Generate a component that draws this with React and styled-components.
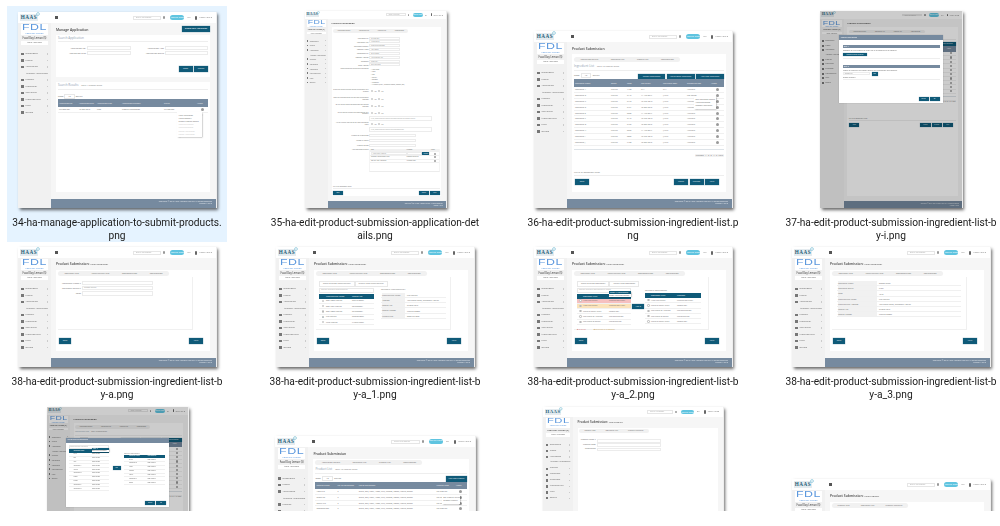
import React from 'react';
import styled, { createGlobalStyle } from 'styled-components';

const GlobalStyle = createGlobalStyle`
  html, body {
    margin: 0;
    background: #fff;
    font-family: 'Open Sans', 'Liberation Sans', sans-serif;
  }
  * {
    box-sizing: border-box;
  }
`;

const Viewport = styled.div`
  height: 511px;
  overflow: hidden;
  padding: 6px 0 0 7px;
`;

const Grid = styled.div`
  display: grid;
  grid-template-columns: repeat(4, 220px);
  column-gap: 38px;
  align-items: start;
`;

const Tile = styled.div`
  display: flex;
  flex-direction: column;
  align-items: center;
  padding-top: 5px;
  background: ${(p) => (p.$selected ? '#e5f3ff' : 'transparent')};
`;

const Slot = styled.div`
  height: ${(p) => p.$h}px;
  display: flex;
  align-items: flex-end;
`;

const Label = styled.div`
  margin-top: 8px;
  font-family: Roboto, 'Open Sans', sans-serif;
  font-size: 10.2px;
  line-height: 13px;
  color: #1a1a1a;
  text-align: center;
  white-space: nowrap;
  filter: blur(0.25px);
  span {
    display: block;
  }
`;

const Shell = styled.div`
  position: relative;
  width: ${(p) => p.$w}px;
  height: ${(p) => p.$h}px;
  background: #fff;
  box-shadow: 1px 0 0 #eee, 2px 2px 3px rgba(0, 0, 0, 0.6);
  filter: blur(0.5px);
`;

const Page = styled.div`
  position: relative;
  zoom: ${(p) => p.$scale};
  width: ${(p) => p.$w / p.$scale}px;
  height: ${(p) => p.$h / p.$scale}px;
  display: flex;
  flex-direction: column;
  overflow: hidden;
  font-family: 'Open Sans', sans-serif;
  font-size: 2.4px;
  line-height: 3px;
  color: #666;
`;

const TopBar = styled.div`
  flex: none;
  height: 11px;
  display: flex;
  align-items: center;
  padding: 0 4px 0 2px;
`;

const Logo = styled.div`
  position: relative;
  width: 18px;
  height: 7px;
  background: #e4ebef;
  font-family: 'Liberation Serif', serif;
  font-weight: 700;
  font-size: 5.2px;
  line-height: 7px;
  letter-spacing: 0.5px;
  text-align: center;
  color: #1d5f78;
  svg {
    position: absolute;
    right: -2px;
    top: -2px;
  }
`;

const Burger = styled.div`
  width: 3px;
  height: 3px;
  margin-left: 17px;
  background: repeating-linear-gradient(#555 0, #555 0.6px, #fff 0.6px, #fff 1.2px);
`;

const SearchBox = styled.div`
  margin-left: auto;
  width: 28px;
  height: 4px;
  border: 0.3px solid #e6e6e6;
  padding-left: 2px;
  font-size: 2.1px;
  line-height: 2.4px;
  color: #aaa;
`;

const Mag = styled.div`
  width: 2.4px;
  height: 2.4px;
  margin: 0 5px 0 2px;
  border-radius: 50%;
  background: #999;
`;

const Pill = styled.div`
  width: 14px;
  height: 4.5px;
  border-radius: 3px;
  background: #5fc4e0;
  color: #fff;
  font-size: 1.7px;
  line-height: 4.5px;
  text-align: center;
  white-space: nowrap;
`;

const TopText = styled.div`
  margin-left: ${(p) => p.$gap || 3}px;
  font-size: 2.2px;
  color: #777;
  white-space: nowrap;
`;

const UserIcon = styled.div`
  width: 2px;
  height: 4px;
  margin-left: 5px;
  border-radius: 1px;
  background: #666;
`;

const Body = styled.div`
  flex: 1;
  min-height: 0;
  display: flex;
`;

const Sidebar = styled.div`
  flex: none;
  width: 33px;
  padding: 1px 3px 0;
  background: #f1f1f1;
`;

const Brand = styled.div`
  height: 11px;
  background: #fff;
  text-align: center;
  color: #5a97dd;
  strong {
    display: block;
    font-family: 'Liberation Sans', sans-serif;
    font-weight: 400;
    font-size: 8.5px;
    line-height: 7.5px;
    letter-spacing: 0.4px;
    transform: scaleX(1.45);
  }
  span {
    display: block;
    font-size: 2.3px;
    line-height: 3px;
  }
`;

const CompanyName = styled.div`
  margin-top: 2px;
  font-size: 2.5px;
  line-height: 3px;
  font-weight: 600;
  color: #555;
  text-align: center;
  white-space: nowrap;
`;

const RoleTag = styled.div`
  margin: 1px 0 6.2px;
  background: #fff;
  font-size: 2.2px;
  line-height: 3.5px;
  text-align: center;
`;

const MenuRow = styled.div`
  height: 6.5px;
  display: flex;
  align-items: center;
  padding-left: ${(p) => (p.$sub ? 5 : 0)}px;
  white-space: nowrap;
  i {
    width: 2.5px;
    height: 2.5px;
    margin-right: 2px;
    background: #777;
  }
  b {
    margin-left: auto;
    width: 1.5px;
    height: 1.5px;
    background: #ccc;
  }
`;

const MainCol = styled.div`
  flex: 1;
  min-width: 0;
  display: flex;
  flex-direction: column;
`;

const Main = styled.div`
  flex: 1;
  min-height: 0;
  display: flex;
  flex-direction: column;
  padding: 0 6px 7px 5px;
  background: #f6f6f6;
`;

const TitleRow = styled.div`
  flex: none;
  height: 12px;
  display: flex;
  align-items: center;
  justify-content: space-between;
  font-size: 3.4px;
  font-weight: 600;
  color: #444;
  small {
    font-size: 2.5px;
    font-weight: 400;
  }
`;

const Card = styled.div`
  position: relative;
  flex: ${(p) => (p.$h ? 'none' : 1)};
  height: ${(p) => (p.$h ? `${p.$h}px` : 'auto')};
  min-height: 0;
  display: flex;
  flex-direction: column;
  margin-bottom: ${(p) => p.$mb || 0}px;
  padding: 1px 2px 2px;
  background: #fff;
  overflow: hidden;
`;

const Footer = styled.div`
  flex: none;
  height: 9.5px;
  padding: 2.5px 4px 0 0;
  background: #768a9f;
  color: #e4e9ee;
  font-size: 1.9px;
  line-height: 2.4px;
  text-align: right;
`;

const Btn = styled.div`
  flex: none;
  width: ${(p) => p.$w || 14}px;
  height: 5.5px;
  margin-top: ${(p) => p.$mt || 0}px;
  background: #0f5a78;
  box-shadow: 0 0 0.5px 0.3px #9fb8c6;
  color: #e8f0f4;
  font-size: 2px;
  line-height: 5.5px;
  text-align: center;
  white-space: nowrap;
`;

const BtnRow = styled.div`
  flex: none;
  display: flex;
  justify-content: ${(p) => p.$justify || 'flex-end'};
  align-items: center;
  gap: ${(p) => p.$gap ?? 1.5}px;
  margin-top: ${(p) => p.$mt ?? 'auto'};
`;

const NavRow = styled.div`
  flex: none;
  display: flex;
  justify-content: space-between;
  align-items: center;
  margin-top: ${(p) => (p.$mt ? `${p.$mt}px` : 'auto')};
  margin-bottom: 5px;
  padding: 0 5px 0 1px;
`;

const TabBar = styled.div`
  flex: none;
  align-self: flex-start;
  display: flex;
  justify-content: space-around;
  width: ${(p) => p.$w || 111}px;
  height: 5px;
  margin-top: ${(p) => p.$mt || 0}px;
  border-radius: 3px;
  background: #f1f1f1;
  font-size: 2.1px;
  line-height: 5px;
  white-space: nowrap;
`;

const Heading = styled.div`
  flex: none;
  margin-top: ${(p) => p.$mt || 0}px;
  padding-bottom: 1px;
  border-bottom: 0.4px solid #eee;
  font-size: 3px;
  line-height: 4px;
  color: #8ea0b0;
  small {
    margin-left: 3px;
    font-size: 2.1px;
    color: #777;
  }
`;

const SectionBox = styled.div`
  position: relative;
  flex: 1;
  min-height: 0;
  margin: 1px 15px 0 0;
  padding: 4px 3px;
  border-bottom: 0.4px solid #f0f0f0;
  border-right: 0.4px solid #f0f0f0;
`;

const FieldGrid = styled.div`
  display: grid;
  grid-template-columns: ${(p) => p.$cols};
  row-gap: ${(p) => p.$gap || 1.2}px;
  column-gap: 1px;
  align-items: center;
  margin-top: ${(p) => p.$mt || 0}px;
`;

const FieldLabel = styled.div`
  text-align: right;
  font-size: 2.2px;
  white-space: nowrap;
`;

const Input = styled.div`
  width: ${(p) => (p.$w ? `${p.$w}px` : 'auto')};
  height: 4.2px;
  border: 0.3px solid #ececec;
  padding-left: 1px;
  font-size: 2.1px;
  line-height: 2.6px;
  color: #888;
  white-space: nowrap;
  overflow: hidden;
`;

const Row = styled.div`
  flex: none;
  display: grid;
  grid-template-columns: ${(p) => p.$cols};
  align-items: center;
  height: ${(p) => p.$h}px;
  padding: 0 1px;
  background: ${(p) => p.$bg || 'transparent'};
  color: ${(p) => p.$color || '#666'};
  border-bottom: ${(p) => (p.$plain ? 'none' : '0.3px solid #f0f0f0')};
  font-size: 1.95px;
  white-space: nowrap;
  overflow: hidden;
`;

const KeyCell = styled.span`
  background: #f1f1f1;
  line-height: 5.3px;
`;

const ValueCell = styled.span`
  padding-left: 2px;
`;

const ActionDot = styled.div`
  justify-self: center;
  width: 3px;
  height: 3px;
  border-radius: 50%;
  background: #9a9a9a;
`;

const Radio = styled.div`
  justify-self: center;
  width: 2.4px;
  height: 2.4px;
  border: 0.3px solid #bbb;
  border-radius: 50%;
  background: ${(p) => (p.$on ? '#0f5a78' : '#fff')};
`;

const Popup = styled.div`
  position: absolute;
  left: ${(p) => p.$x}px;
  top: ${(p) => p.$y}px;
  width: ${(p) => p.$w}px;
  padding: 1.5px;
  background: #fff;
  box-shadow: 0.5px 0.5px 1.5px rgba(0, 0, 0, 0.5);
  font-size: 1.9px;
  line-height: 3.2px;
  white-space: nowrap;
`;

const MutedLine = styled.div`
  color: #c8c8c8;
`;

const Overlay = styled.div`
  position: absolute;
  inset: 0;
  background: rgba(0, 0, 0, 0.2);
`;

const Modal = styled.div`
  position: absolute;
  left: ${(p) => p.$x}px;
  top: ${(p) => p.$y}px;
  width: ${(p) => p.$w}px;
  height: ${(p) => p.$h}px;
  display: flex;
  flex-direction: column;
  background: #fff;
  box-shadow: 0 0 1px rgba(0, 0, 0, 0.5);
`;

const ModalHead = styled.div`
  flex: none;
  height: 7px;
  padding-left: 2px;
  background: #768a9f;
  color: #fff;
  font-size: 2.6px;
  line-height: 7px;
`;

const ModalBody = styled.div`
  flex: 1;
  min-height: 0;
  display: flex;
  flex-direction: column;
  padding: ${(p) => p.$pad || '6px 5px 4px'};
`;

const StepHead = styled.div`
  margin-bottom: 1px;
  padding-left: 1px;
  background: #768a9f;
  color: #fff;
  font-size: 2.4px;
  line-height: 5px;
`;

const StepBox = styled.div`
  height: ${(p) => p.$h}px;
  margin-bottom: 8px;
  border-bottom: 0.3px solid #eee;
  font-size: 2.1px;
`;

const Split = styled.div`
  display: flex;
  gap: ${(p) => p.$gap || 4}px;
  align-items: ${(p) => p.$align || 'flex-start'};
  margin-top: ${(p) => p.$mt || 0}px;
`;

const ListCol = styled.div`
  position: relative;
  flex: none;
  width: ${(p) => p.$w}px;
  min-height: ${(p) => p.$minH || 0}px;
  margin-left: ${(p) => p.$ml || 0}px;
`;

const DocTable = styled(ListCol)`
  border-bottom: 0.3px solid #ececec;
  border-left: 0.3px solid #f4f4f4;
  border-right: 0.3px solid #f4f4f4;
`;

const SmallTitle = styled.div`
  margin-bottom: 1px;
  font-size: 2.3px;
  line-height: 3.5px;
  color: #777;
`;

const SearchField = styled.div`
  height: 4.5px;
  margin-bottom: 1px;
  border: 0.3px solid #e8e8e8;
  padding-left: 1px;
  font-size: 1.9px;
  line-height: 2.5px;
  color: #aaa;
  white-space: nowrap;
  overflow: hidden;
`;

const Outline = styled.div`
  flex: none;
  padding: 0 3px;
  border: 0.3px solid #e8e8e8;
  font-size: 2.1px;
  line-height: 3.5px;
  white-space: nowrap;
`;

const DarkMenu = styled(Popup)`
  padding: 0;
  line-height: 3px;
  div:first-child {
    background: #0f5a78;
    color: #fff;
    padding-left: 1px;
  }
`;

const Legend = styled.div`
  display: flex;
  gap: 8px;
  margin-top: 3px;
  font-size: 2px;
  span:first-child {
    color: #d87a7a;
  }
  span:last-child {
    color: #caa35a;
  }
`;

const Note = styled.div`
  flex: none;
  margin-top: ${(p) => p.$mt || 'auto'};
  padding-bottom: 1px;
  border-bottom: 0.4px solid #eee;
  font-size: 2.1px;
`;

const Pager = styled.div`
  flex: none;
  align-self: flex-end;
  margin-top: 4px;
  padding: 0 1px;
  border-radius: 1px;
  background: #f1f1f1;
  font-size: 2px;
  line-height: 3px;
  word-spacing: 1px;
`;

const ScrollLine = styled.div`
  flex: none;
  height: 1px;
  margin-top: 3px;
  background: #dde3e8;
`;

const ShowRow = styled.div`
  flex: none;
  display: flex;
  align-items: center;
  justify-content: ${(p) => p.$justify || 'space-between'};
  margin-top: ${(p) => p.$mt || 2}px;
  height: ${(p) => p.$h || 6}px;
  font-size: 2.1px;
  b {
    font-weight: 400;
    margin: 0 1px;
    padding: 0 3px;
    border: 0.3px solid #e8e8e8;
  }
`;

const CheckList = styled.div`
  padding-left: 2px;
  font-size: 2.1px;
  line-height: 3.65px;
`;

const QuestionRow = styled.div`
  display: grid;
  grid-template-columns: 50px 1fr;
  column-gap: 1px;
  align-items: ${(p) => (p.$top ? 'start' : 'center')};
  margin-top: ${(p) => p.$mt || 4}px;
`;

const QuestionLabel = styled.div`
  font-size: 1.9px;
  line-height: 2.6px;
  text-align: right;
`;

const Choices = styled.div`
  display: flex;
  align-items: center;
  gap: 2px;
  padding-left: 2px;
  font-size: 2.1px;
`;

const TextBlock = styled.div`
  height: 7px;
  margin: 1px 0 0 51px;
  width: 88px;
  border: 0.3px solid #ececec;
  padding: 1px;
  font-size: 1.9px;
  color: #999;
  white-space: nowrap;
  overflow: hidden;
`;

const menuItems = [
  'Dashboard',
  'Profile',
  'Application',
  '*Manage Application',
  'Product',
  'Ingredient',
  'Certificate',
  'Manufacturer',
  'User',
  'Others',
];

const Frame = ({ w, h, scale = 1, children, over }) => (
  <Shell $w={w} $h={h}>
    <Page $w={w} $h={h} $scale={scale}>
      <TopBar>
        <Logo>
          HAAS
          <svg width="4" height="4" viewBox="0 0 4 4">
            <circle cx="2" cy="2" r="1.4" fill="#fff" stroke="#4aa7c4" strokeWidth="0.5" />
          </svg>
        </Logo>
        <Burger />
        <SearchBox>Enter Keywords</SearchBox>
        <Mag />
        <Pill>Food Day Lemon</Pill>
        <TopText>EN</TopText>
        <UserIcon />
        <TopText $gap={2}>Kevin Hays ▾</TopText>
      </TopBar>
      <Body>
        <Sidebar>
          <Brand>
            <strong>FDL</strong>
            <span>Food Day Lemon</span>
          </Brand>
          <CompanyName>Food Day Lemon (S)</CompanyName>
          <RoleTag>Main Applicant</RoleTag>
          {menuItems.map((item) =>
            item[0] === '*' ? (
              <MenuRow key={item} $sub>
                {item.slice(1)}
              </MenuRow>
            ) : (
              <MenuRow key={item}>
                <i />
                {item}
                <b />
              </MenuRow>
            )
          )}
        </Sidebar>
        <MainCol>
          <Main>{children}</Main>
          <Footer>
            Copyright © 2017 Halal Authority Pte Ltd. All Rights Reserved
            <br />
            Version 1.0.0.0
          </Footer>
        </MainCol>
      </Body>
      {over}
    </Page>
  </Shell>
);

const SubmitTitle = ({ sub }) => (
  <TitleRow>
    <span>
      Product Submission{sub ? ': ' : ''}
      {sub && <small>{sub}</small>}
    </span>
  </TitleRow>
);

const SubmissionTabs = ({ mt }) => (
  <TabBar $w={106} $mt={mt}>
    <span>Application Details</span>
    <span>Ingredient List</span>
    <span>Product List</span>
    <span>Confirmation</span>
  </TabBar>
);

const ManageApplication = () => {
  const cols = '20px 18px 25px 42px 33px 1fr';
  return (
    <>
      <TitleRow>
        <span>Manage Application</span>
        <Btn $w={28}>Create New Application</Btn>
      </TitleRow>
      <Card $h={42} $mb={5}>
        <Heading>Search Application</Heading>
        <FieldGrid $cols="28px 44px 32px 43px" $mt={4} $gap={1}>
          <FieldLabel>Application No.</FieldLabel>
          <Input />
          <FieldLabel>Application Year</FieldLabel>
          <Input />
          <FieldLabel>Application Type</FieldLabel>
          <Input />
          <FieldLabel>Application Status</FieldLabel>
          <Input />
        </FieldGrid>
        <BtnRow $mt="11px">
          <Btn>Reset</Btn>
          <Btn>Search</Btn>
        </BtnRow>
      </Card>
      <Card>
        <Heading>
          Search Results<small>Total 1 records found</small>
        </Heading>
        <ShowRow $mt={3} $h={6} $justify="flex-start">
          Show <b>10</b> Entries
        </ShowRow>
        <Row $cols={cols} $h={8} $bg="#768a9f" $color="#f2f4f6" $plain>
          <span>Application No.</span>
          <span>Application Date</span>
          <span>Application Type</span>
          <span>Application Category</span>
          <span>Status</span>
          <span>Action</span>
        </Row>
        <Row $cols={cols} $h={6}>
          <span>PR18001001</span>
          <span>12 Sep 2018</span>
          <span>New</span>
          <span>Product Submission</span>
          <span>In Progress</span>
          <ActionDot />
        </Row>
        <Popup $x={121} $y={30} $w={25}>
          <div>View Application</div>
          <div>View Summary</div>
          <div>Submit Product Details</div>
          <MutedLine>View Cert Details</MutedLine>
          <MutedLine>View Documents</MutedLine>
          <MutedLine>Renew Application</MutedLine>
          <MutedLine>Cancel Application</MutedLine>
        </Popup>
      </Card>
    </>
  );
};

const YesNo = ({ label, mt }) => (
  <QuestionRow $mt={mt}>
    <QuestionLabel>{label}</QuestionLabel>
    <Choices>
      <Radio /> Yes <Radio /> No
    </Choices>
  </QuestionRow>
);

const ApplicationDetails = () => {
  const fields = [
    ['Application No.', 'PR18001001'],
    ['Application Year', '12 Sep 2018'],
    ['Application Category', 'Product Submission'],
    ['Company Name', 'ABC Foods'],
    ['Registration No.', '2018100201'],
    ['Company Address', '123 Clementi Ave'],
    ['Telephone', '69001234'],
    ['Email Address', 'abc@abc.com'],
  ];
  return (
    <>
      <SubmitTitle />
      <Card>
        <SubmissionTabs mt={2} />
        <FieldGrid $cols="50px 43px" $mt={5} $gap={1.2}>
          {fields.map(([label, value]) => (
            <React.Fragment key={label}>
              <FieldLabel>{label}</FieldLabel>
              <Input>{value}</Input>
            </React.Fragment>
          ))}
        </FieldGrid>
        <QuestionRow $mt={2} $top>
          <QuestionLabel>Please indicate the types of halal certification</QuestionLabel>
          <CheckList>
            <div>○ Halal Logo</div>
            <div>○ Meat</div>
            <div>○ Fish</div>
            <div>○ Poultry</div>
            <div>○ Seafood</div>
            <div>○ Vegetable</div>
            <div>○ All others (Dairy, Vegetable Based, Dessert, Etc)</div>
          </CheckList>
        </QuestionRow>
        <YesNo mt={5} label="Is there any animal or animal derived ingredients in your product?" />
        <YesNo mt={5.3} label="Does your premises handle any non-halal ingredients or products?" />
        <YesNo mt={5.3} label="Do you use any shared equipment with non-certified products?" />
        <YesNo mt={5} label="Do you have an external halal consultant for your company?" />
        <TextBlock>If yes, please state the name of the consultant and the contact number</TextBlock>
        <YesNo mt={2} label="Are you currently applying for any other certification body?" />
        <TextBlock>If yes, please state the name of the certification body</TextBlock>
        <FieldGrid $cols="50px 65px" $mt={3} $gap={2.8}>
          <FieldLabel>Number of Muslim Staff</FieldLabel>
          <Input />
          <FieldLabel>Person in Charge</FieldLabel>
          <Input />
          <FieldLabel>Number of Staff</FieldLabel>
          <Input />
        </FieldGrid>
        <QuestionRow $mt={3} $top>
          <QuestionLabel>Halal Documents Checklist</QuestionLabel>
          <DocTable $w={100} $minH={32}>
            <Row $cols="50px 34px 1fr" $h={4} $bg="#f1f1f1">
              <span>Item</span>
              <span>Filename</span>
              <span>Action</span>
            </Row>
            <Row $cols="50px 22px 12px 1fr" $h={6}>
              <Input>Halal Policy Manual</Input>
              <Input />
              <Btn $w={10}>Upload</Btn>
              <ActionDot />
            </Row>
            <Row $cols="50px 34px 1fr" $h={5}>
              <span>Company Organisation Chart</span>
              <span>Companychart.pdf</span>
              <ActionDot />
            </Row>
            <Row $cols="50px 34px 1fr" $h={5}>
              <span>SOP for Halal Assurance</span>
              <span>HalalSOP.docx</span>
              <ActionDot />
            </Row>
          </DocTable>
        </QuestionRow>
        <Note>*Fill in all mandatory fields</Note>
        <BtnRow $justify="space-between" $mt="3px">
          <Btn>Back</Btn>
          <BtnRow>
            <Btn>Cancel</Btn>
            <Btn>Next</Btn>
          </BtnRow>
        </BtnRow>
      </Card>
    </>
  );
};

const ingredientRows = [
  ['Ingredient A', 'Natural', '1123', 'N/A', 'N/A', 'Available'],
  ['Ingredient B', 'Natural', '5115', '11 Aug 2017', 'JAKIM', 'Not Found'],
  ['Ingredient C', 'Natural', '5173', '12 May 2016', 'JAKIM', 'Available'],
  ['Ingredient D', 'Natural', '5161', '10 Sep 2018', 'JAKIM', 'Available'],
  ['Ingredient E', 'Natural', '5608', '11 Aug 2017', 'JAKIM', 'Available'],
  ['Ingredient F', 'Natural', '6115', '12 May 2016', 'JAKIM', 'Available'],
  ['Ingredient G', 'Natural', '5156', '10 Sep 2018', 'JAKIM', 'Available'],
  ['Ingredient H', 'Natural', '5555', '11 Aug 2017', 'JAKIM', 'Available'],
  ['Ingredient I', 'Natural', '6005', '12 May 2016', 'JAKIM', 'Available'],
  ['Ingredient J', 'Natural', '7180', '10 Sep 2018', 'JAKIM', 'Available'],
];

const IngredientList = ({ showPopup, noteGap }) => {
  const cols = '36px 16px 14px 22px 24px 24px 1fr';
  return (
    <>
      <SubmitTitle />
      <Card>
        <SubmissionTabs mt={2} />
        <Heading $mt={2}>
          Ingredient List<small>Total 10 records found</small>
        </Heading>
        <ShowRow $mt={1} $h={7}>
          <span>
            Show <b>10</b> Entries
          </span>
          <BtnRow>
            <Btn $w={27}>Import Ingredients</Btn>
            <Btn $w={28}>Add Existing Ingredient</Btn>
            <Btn $w={28}>Add New Ingredient</Btn>
          </BtnRow>
        </ShowRow>
        <Row $cols={cols} $h={8} $bg="#768a9f" $color="#f2f4f6" $plain>
          <span>Ingredient Name</span>
          <span>Origin</span>
          <span>Code</span>
          <span>Cert Expiry</span>
          <span>Certificate Body</span>
          <span>Supporting Doc</span>
          <span>Action</span>
        </Row>
        {ingredientRows.map((r) => (
          <Row key={r[0]} $cols={cols} $h={5.9}>
            {r.map((c, i) => (
              <span key={i}>{c}</span>
            ))}
            <ActionDot />
          </Row>
        ))}
        {showPopup && (
          <Popup $x={122} $y={42} $w={22}>
            <div>Edit Ingredient Details</div>
            <div>View Documents</div>
            <div>Remove Ingredient</div>
          </Popup>
        )}
        <ScrollLine />
        <Pager>Previous 1 2 3 4 5 Next</Pager>
        <Note $mt={noteGap}>*Fill in all mandatory fields</Note>
        <NavRow $mt={3}>
          <Btn>Back</Btn>
          <BtnRow $mt="0">
            <Btn>Cancel</Btn>
            <Btn>Preview</Btn>
            <Btn>Next</Btn>
          </BtnRow>
        </NavRow>
      </Card>
    </>
  );
};

const NewIngredientShell = ({ children }) => (
  <>
    <SubmitTitle sub="New Ingredient" />
    <Card>
      <TabBar>
        <span>Ingredient Info</span>
        <span>Manufacturer Info</span>
        <span>Documentation</span>
        <span>Confirmation</span>
      </TabBar>
      <SectionBox>{children}</SectionBox>
      <NavRow $mt={8}>
        <Btn $w={12}>Back</Btn>
        <Btn $w={14}>Next</Btn>
      </NavRow>
    </Card>
  </>
);

const IngredientForm = () => (
  <NewIngredientShell>
    <FieldGrid $cols="20px 71px" $gap={1}>
      <FieldLabel>Ingredient Name *</FieldLabel>
      <Input />
      <FieldLabel>Ingredient Origin *</FieldLabel>
      <Input>Please select</Input>
      <FieldLabel>Code</FieldLabel>
      <Input />
    </FieldGrid>
  </NewIngredientShell>
);

const ManufacturerPick = () => {
  const cols = '6px 26px 1fr';
  const rows = [
    ['Best Food Limited', '65015736021'],
    ['Best Cola Limited', '5873636021'],
    ['Best Food Limited', '5573636021'],
    ['Uni Limited', '65866873021'],
    ['MFG Limited', '71656776321'],
  ];
  const details = [
    ['Manufacturer Name', 'Uni Limited'],
    ['Address', '123 Clover Road, Singapore 123456'],
    ['Contact No.', '5738374872'],
    ['Contact Person', 'Marcus Brown'],
    ['Website URL', 'www.uni.com'],
  ];
  return (
    <NewIngredientShell>
      <BtnRow $justify="flex-start" $gap={0} $mt="0">
        <Outline>Select Existing Manufacturer</Outline>
        <Outline>Create New Manufacturer</Outline>
      </BtnRow>
      <Split $gap={7} $mt={1.5}>
        <ListCol $w={55}>
          <SearchField>Search available manufacturer</SearchField>
          <Row $cols={cols} $h={5} $bg="#0f5a78" $color="#fff" $plain>
            <span />
            <span>Manufacturer Name</span>
            <span>Contact No.</span>
          </Row>
          {rows.map((r, i) => (
            <Row key={i} $cols={cols} $h={5.4}>
              <Radio $on={i === 3} />
              <span>{r[0]}</span>
              <span>{r[1]}</span>
            </Row>
          ))}
        </ListCol>
        <ListCol $w={65}>
          <SmallTitle>Selected Manufacturer</SmallTitle>
          {details.map(([a, b]) => (
            <Row key={a} $cols="23px 1fr" $h={5.3}>
              <KeyCell>{a}</KeyCell>
              <ValueCell>{b}</ValueCell>
            </Row>
          ))}
        </ListCol>
      </Split>
    </NewIngredientShell>
  );
};

const DocumentPick = () => {
  const cols = '5px 26px 1fr';
  const rows = [
    ['Halal Certificate', 'halalcert2016.pdf', '#f6c0c0'],
    ['Halal Certificate', 'halalcert2017.pdf', '#fbe3bb'],
    ['Material Safety Data', 'Invoice.pdf'],
    ['Certificate of Analysis', 'Certanalysis.pdf'],
    ['Certificate of Origin', 'Certorigin.pdf'],
  ];
  const chosen = [
    ['Halal Certificate', 'halalcert2016.pdf'],
    ['Material Safety Data', 'Invoice.pdf'],
    ['Certificate of Analysis', 'Certanalysis.pdf'],
    ['Certificate of Origin', 'Certorigin.pdf'],
    ['Material Safety Data', 'Invoice.pdf'],
  ];
  return (
    <NewIngredientShell>
      <BtnRow $justify="flex-start" $gap={0} $mt="0">
        <Outline>Select Existing Document</Outline>
        <Outline>Create New Document</Outline>
      </BtnRow>
      <Split $gap={1} $align="center" $mt={1.5}>
        <ListCol $w={54}>
          <SearchField>Search available document by name</SearchField>
          <Row $cols={cols} $h={5} $bg="#0f5a78" $color="#fff" $plain>
            <span />
            <span>Document Type</span>
            <span>Filename</span>
          </Row>
          {rows.map((r, i) => (
            <Row key={i} $cols={cols} $h={5.3} $bg={r[2]}>
              <Radio />
              <span>{r[0]}</span>
              <span>{r[1]}</span>
            </Row>
          ))}
          <DarkMenu $x={32} $y={3} $w={22}>
            <div>Show All Documents</div>
            <div>Show Valid Documents</div>
          </DarkMenu>
        </ListCol>
        <Btn $w={12}>Add ▸</Btn>
        <ListCol $w={56}>
          <SmallTitle>Selected Documents</SmallTitle>
          <Row $cols={cols} $h={5} $bg="#0f5a78" $color="#fff" $plain>
            <span />
            <span>Document Type</span>
            <span>Filename</span>
          </Row>
          {chosen.map((r, i) => (
            <Row key={i} $cols={cols} $h={5.3}>
              <Radio />
              <span>{r[0]}</span>
              <span>{r[1]}</span>
            </Row>
          ))}
        </ListCol>
      </Split>
      <Legend>
        <span>■ Expired</span>
        <span>■ Expiring in 3 months</span>
      </Legend>
    </NewIngredientShell>
  );
};

const IngredientSummary = () => {
  const rows = [
    ['Ingredient Name', 'Brown Sugar'],
    ['Ingredient Origin', 'Plant'],
    ['Code', '1342'],
    ['Manufacturer Name', 'Uni Limited'],
    ['Manufacturer Address', '123 Clover Road, Singapore 123456'],
    ['Contact No.', '5738374872'],
    ['Contact Person', 'Marcus Brown'],
  ];
  return (
    <NewIngredientShell>
      <ListCol $w={124} $ml={2}>
        {rows.map(([a, b]) => (
          <Row key={a} $cols="39px 1fr" $h={5.2}>
            <KeyCell>{a}</KeyCell>
            <ValueCell>{b}</ValueCell>
          </Row>
        ))}
      </ListCol>
    </NewIngredientShell>
  );
};

const ProductList = () => {
  const cols = '21px 21px 77px 19px 1fr';
  const names = ['Apple Pie', 'Peach Pie', 'Cherry Pie', 'Chocolate Bar'];
  return (
    <>
      <SubmitTitle />
      <Card>
        <SubmissionTabs />
        <Heading $mt={2}>
          Product List<small>Total 10 records found</small>
        </Heading>
        <ShowRow $mt={1} $h={7}>
          <span>
            Show <b>10</b> Entries
          </span>
          <Btn $w={21}>Add New Product</Btn>
        </ShowRow>
        <Row $cols={cols} $h={6.5} $bg="#768a9f" $color="#f2f4f6" $plain>
          <span>Product Name</span>
          <span>No. of Ingredients</span>
          <span>List of Ingredients</span>
          <span>Product Code</span>
          <span>Action</span>
        </Row>
        {names.map((name) => (
          <Row key={name} $cols={cols} $h={5.8}>
            <span>{name}</span>
            <span>5</span>
            <span>Sugar, Salt, Flour, Yeast, Milk, Cheese, Cocoa, Vanilla, Butter</span>
            <span>CD1323123</span>
            <ActionDot />
          </Row>
        ))}
        <Popup $x={127} $y={35} $w={18}>
          <div>Edit Product Details</div>
          <div>Remove Product</div>
        </Popup>
      </Card>
    </>
  );
};

const ProductForm = () => (
  <>
    <SubmitTitle sub="New Product" />
    <Card>
      <TabBar $w={76}>
        <span>Product Info</span>
        <span>Ingredient List</span>
        <span>Product Checklist</span>
      </TabBar>
      <FieldGrid $cols="18px 71px" $gap={0.6} $mt={6}>
        <FieldLabel>Product Name *</FieldLabel>
        <Input />
        <FieldLabel>Product Code</FieldLabel>
        <Input />
        <FieldLabel>Description</FieldLabel>
        <Input />
      </FieldGrid>
      <NavRow>
        <Btn $w={12}>Back</Btn>
        <Btn $w={14}>Next</Btn>
      </NavRow>
    </Card>
  </>
);

const ImportModal = () => (
  <>
    <Overlay />
    <Modal $x={27} $y={34} $w={145} $h={95}>
      <ModalHead>Import Ingredients</ModalHead>
      <ModalBody>
        <StepHead>Step 1</StepHead>
        <StepBox $h={14}>
          <div>Download the excel template to update the list of ingredients to be imported.</div>
          <Btn $w={34} $mt={2}>
            Download Excel Template
          </Btn>
        </StepBox>
        <StepHead>Step 2</StepHead>
        <StepBox $h={15}>
          <div>Upload the updated excel template with the list of ingredients to be imported.</div>
          <Split $gap={2} $mt={1}>
            <Input $w={38}>Choose File</Input>
            <Btn $w={9}>Next</Btn>
          </Split>
          <div>Remove Template</div>
        </StepBox>
        <BtnRow>
          <Btn $w={14}>Cancel</Btn>
          <Btn $w={14}>OK</Btn>
        </BtnRow>
      </ModalBody>
    </Modal>
  </>
);

const ExistingModal = () => {
  const cols = '6px 26px 1fr';
  const left = ['Flour', 'Salt', 'Milk', 'Ingredient A', 'Vanilla', 'Ingredient B', 'Butter', 'Cocoa', 'Ingredient C', 'Ingredient D'];
  const right = ['Sugar', 'Ingredient E', 'Yeast', 'Cheese', 'Honey', 'Ingredient F', 'Butter'];
  return (
    <>
      <Overlay />
      <Modal $x={27} $y={44} $w={145} $h={97}>
        <ModalHead>Add Existing Ingredients</ModalHead>
        <ModalBody $pad="3px 4px">
          <Split $gap={5} $align="center">
            <ListCol $w={57}>
              <SearchField>Search available ingredients</SearchField>
              <Row $cols={cols} $h={5} $bg="#0f5a78" $color="#fff" $plain>
                <span />
                <span>Ingredient Name</span>
                <span>Manufacturer</span>
              </Row>
              {left.map((n) => (
                <Row key={n} $cols={cols} $h={5.4}>
                  <span />
                  <span>{n}</span>
                  <span>Best Limited</span>
                </Row>
              ))}
              <DarkMenu $x={33} $y={3} $w={24}>
                <div>Show All</div>
                <div>Show Valid Ingredients</div>
              </DarkMenu>
            </ListCol>
            <Btn $w={11}>Add</Btn>
            <ListCol $w={57}>
              <SmallTitle>Selected Ingredients</SmallTitle>
              <Row $cols={cols} $h={5} $bg="#0f5a78" $color="#fff" $plain>
                <span />
                <span>Ingredient Name</span>
                <span>Manufacturer</span>
              </Row>
              {right.map((n) => (
                <Row key={n} $cols={cols} $h={5.4}>
                  <span />
                  <span>{n}</span>
                  <span>Best Limited</span>
                </Row>
              ))}
            </ListCol>
          </Split>
          <BtnRow>
            <Btn $w={14}>Cancel</Btn>
            <Btn $w={14}>OK</Btn>
          </BtnRow>
        </ModalBody>
      </Modal>
    </>
  );
};

const tiles = [
  { slot: 197, w: 198, h: 196, selected: true, lines: ['34-ha-manage-application-to-submit-products.', 'png'], body: <ManageApplication /> },
  { slot: 197, w: 141, h: 197, scale: 0.712, lines: ['35-ha-edit-product-submission-application-det', 'ails.png'], body: <ApplicationDetails /> },
  { slot: 197, w: 198, h: 177, lines: ['36-ha-edit-product-submission-ingredient-list.p', 'ng'], body: <IngredientList showPopup /> },
  { slot: 197, w: 142, h: 197, scale: 0.717, lines: ['37-ha-edit-product-submission-ingredient-list-b', 'y-i.png'], body: <IngredientList noteGap="22px" />, over: <ImportModal /> },
  { slot: 120, w: 198, h: 120, lines: ['38-ha-edit-product-submission-ingredient-list-b', 'y-a.png'], body: <IngredientForm /> },
  { slot: 120, w: 198, h: 120, lines: ['38-ha-edit-product-submission-ingredient-list-b', 'y-a_1.png'], body: <ManufacturerPick /> },
  { slot: 120, w: 198, h: 120, lines: ['38-ha-edit-product-submission-ingredient-list-b', 'y-a_2.png'], body: <DocumentPick /> },
  { slot: 120, w: 198, h: 120, lines: ['38-ha-edit-product-submission-ingredient-list-b', 'y-a_3.png'], body: <IngredientSummary /> },
  { slot: 198, w: 141, h: 197, scale: 0.712, body: <IngredientList noteGap="22px" />, over: <ExistingModal /> },
  { slot: 198, w: 200, h: 168, scale: 1.01, body: <ProductList /> },
  { slot: 198, w: 180, h: 197, scale: 0.91, body: <ProductForm /> },
  { slot: 198, w: 198, h: 125, body: <ProductForm /> },
];

const App = () => (
  <>
    <GlobalStyle />
    <Viewport>
      <Grid>
        {tiles.map((t, i) => (
          <Tile key={i} $selected={t.selected}>
            <Slot $h={t.slot}>
              <Frame w={t.w} h={t.h} scale={t.scale} over={t.over}>
                {t.body}
              </Frame>
            </Slot>
            {t.lines && (
              <Label>
                {t.lines.map((l) => (
                  <span key={l}>{l}</span>
                ))}
              </Label>
            )}
          </Tile>
        ))}
      </Grid>
    </Viewport>
  </>
);

export default App;
